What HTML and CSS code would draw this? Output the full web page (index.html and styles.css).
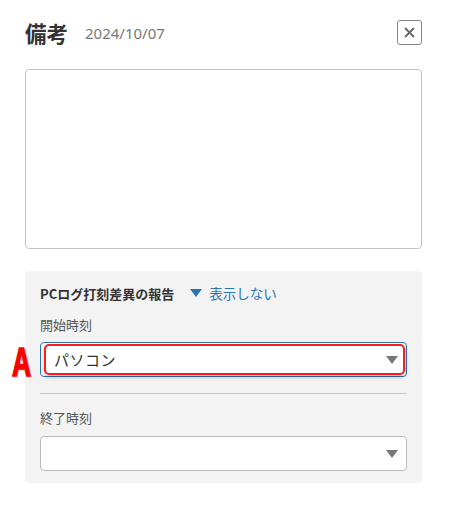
FILE: index.html
```html
<!DOCTYPE html>
<html lang="ja">
<head>
<meta charset="utf-8">
<link rel="stylesheet" href="styles.css">
</head>
<body>
<div class="dialog">
  <div class="header">
    <h1 class="title">備考</h1>
    <span class="date">2024/10/07</span>
    <button class="close" aria-label="閉じる">
      <svg width="11" height="11" viewBox="0 0 11 11"><path d="M1.5 1.5L9.5 9.5M9.5 1.5L1.5 9.5" stroke="#666" stroke-width="1.8" stroke-linecap="round"/></svg>
    </button>
  </div>
  <div class="textarea"></div>
  <div class="panel">
    <div class="panel-head">
      <span class="panel-title">PCログ打刻差異の報告</span>
      <span class="toggle"><span class="tri"></span>表示しない</span>
    </div>
    <div class="label">開始時刻</div>
    <div class="field-wrap">
      <span class="mark">A</span>
      <div class="select focus">
        <span class="value">パソコン</span>
        <span class="arrow"></span>
        <span class="annot"></span>
      </div>
    </div>
    <div class="divider"></div>
    <div class="label">終了時刻</div>
    <div class="select">
      <span class="value"></span>
      <span class="arrow"></span>
    </div>
  </div>
</div>
</body>
</html>
```

FILE: styles.css
```css
* { box-sizing: border-box; }
html, body { margin: 0; padding: 0; background: #fff; }
body {
  font-family: "Noto Sans CJK JP", "Noto Sans", sans-serif;
  color: #333;
}
.dialog {
  padding: 20px 28px 0 25px;
}
.header {
  display: flex;
  align-items: center;
  height: 25px;
}
.title {
  margin: 0;
  font-size: 21.5px;
  font-weight: 700;
  color: #333;
  line-height: 25px;
}
.date {
  margin-left: 17px;
  font-family: "Noto Sans", sans-serif;
  font-size: 15px;
  color: #777;
  line-height: 25px;
  margin-top: 1px;
}
.close {
  margin-left: auto;
  width: 25px;
  height: 25px;
  border: 1px solid #888;
  border-radius: 3px;
  background: #fff;
  padding: 0;
  display: flex;
  align-items: center;
  justify-content: center;
}
.textarea {
  margin-top: 24px;
  height: 180px;
  border: 1px solid #c4c4c4;
  border-radius: 4px;
  background: #fff;
}
.panel {
  margin-top: 22px;
  background: #f3f3f3;
  border-radius: 4px;
  padding: 12px 15px 11px 15px;
  height: 212px;
}
.panel-head {
  display: flex;
  align-items: center;
  height: 20px;
}
.panel-title {
  font-size: 13px;
  font-weight: 700;
  color: #333;
}
.toggle {
  margin-left: 16px;
  display: flex;
  align-items: center;
  font-size: 13.5px;
  color: #2b73b5;
}
.tri {
  width: 0;
  height: 0;
  border-left: 6px solid transparent;
  border-right: 6px solid transparent;
  border-top: 8px solid #2b73b5;
  margin-right: 7px;
}
.label {
  margin-top: 13px;
  font-size: 13px;
  color: #555;
  line-height: 18px;
}
.field-wrap {
  position: relative;
  margin-top: 8px;
}
.mark {
  position: absolute;
  left: -28px;
  top: 0;
  font-family: "Liberation Sans", sans-serif;
  font-weight: 700;
  font-size: 40px;
  line-height: 1;
  color: #ff0000;
  transform: scaleX(0.66);
  transform-origin: left top;
  -webkit-text-stroke: 1.5px #ff0000;
  text-shadow: 1px 1px 2px rgba(0,0,0,0.35);
}
.select {
  position: relative;
  height: 35px;
  border: 1px solid #bbb;
  border-radius: 4px;
  background: #fff;
  display: flex;
  align-items: center;
  padding: 0 8px 0 13px;
  margin-top: 9px;
}
.field-wrap .select { margin-top: 0; }
.select.focus {
  border-color: #2b73b5;
}
.value {
  font-size: 15px;
  color: #333;
  letter-spacing: 0.5px;
}
.arrow {
  margin-left: auto;
  width: 0;
  height: 0;
  border-left: 6.5px solid transparent;
  border-right: 6.5px solid transparent;
  border-top: 8px solid #777;
}
.annot {
  position: absolute;
  left: 3px;
  top: 1px;
  right: 1px;
  bottom: 1px;
  border: 2px solid #ff1a1a;
  border-radius: 5px;
  box-shadow: 0 2px 4px rgba(0,0,0,0.25);
}
.divider {
  margin-top: 16px;
  height: 1px;
  background: #c8c8cc;
}
.divider + .label { margin-top: 15px; }
```
